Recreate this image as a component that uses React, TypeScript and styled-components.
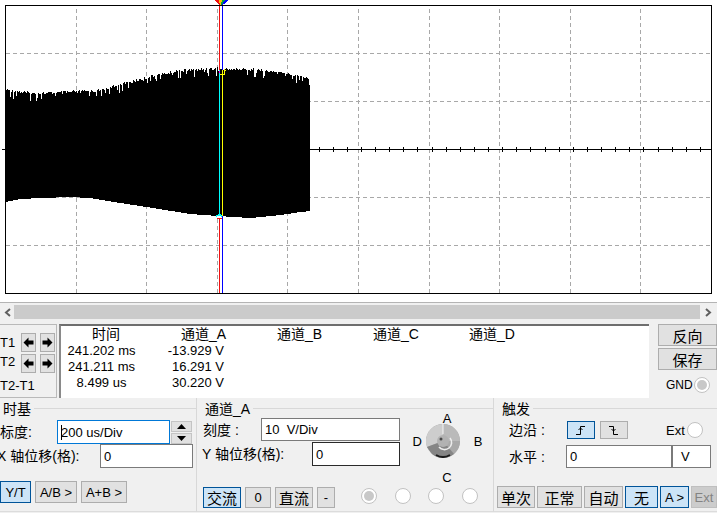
import React from "react";
import styled, { createGlobalStyle } from "styled-components";

const GlobalStyle = createGlobalStyle`
  html, body { margin: 0; padding: 0; background: #f0f0f0; }
  body { font-family: "Liberation Sans", "Noto Sans CJK SC", sans-serif; font-size: 13px; color: #000; }
`;

const Page = styled.div`
  width: 717px;
  height: 513px;
  overflow: hidden;
  display: flex;
  flex-direction: column;
  background: #f0f0f0;
`;

const PlotArea = styled.div`
  height: 302px;
  background: #fff;
  border-bottom: 1px solid #b4b4b4;
  svg { display: block; }
`;

const ScrollBar = styled.div`
  height: 14px;
  margin-top: 2px;
  display: flex;
  align-items: center;
`;
const ScrollEnd = styled.div<{ $width: number }>`
  width: ${(p) => p.$width}px;
  display: flex;
  justify-content: center;
  align-items: center;
`;
const ScrollTrack = styled.div`
  width: 686px;
  height: 14px;
  background: #cbcbcb;
`;

const ReadoutRow = styled.div`
  margin-top: 5px;
  height: 74px;
  display: flex;
`;

const CursorPanel = styled.div`
  width: 57px;
  box-sizing: border-box;
  border-top: 1px solid #b9b9b9;
  border-right: 1px solid #b9b9b9;
  border-bottom: 1px solid #b9b9b9;
  padding-top: 8px;
  display: flex;
  flex-direction: column;
  gap: 2px;
`;
const CursorRow = styled.div`
  display: flex;
  align-items: center;
  height: 19px;
  gap: 4px;
`;
const CursorName = styled.span<{ $raise?: number }>`
  width: 17px;
  line-height: 19px;
  padding-bottom: ${(p) => p.$raise ?? 0}px;
`;
const CursorDiff = styled.div`
  margin-top: 3px;
  line-height: 15px;
`;
const ArrowButton = styled.div`
  width: 15px;
  height: 19px;
  box-sizing: border-box;
  background: #e1e1e1;
  border: 1px solid #adadad;
  display: flex;
  align-items: center;
  justify-content: center;
`;

const DataBox = styled.div`
  margin-left: 2px;
  width: 590px;
  box-sizing: border-box;
  background: #fff;
  border-top: 2px solid #6e6e6e;
  border-left: 2px solid #8a8a8a;
  display: grid;
  grid-template-columns: 84px repeat(4, 96px);
  grid-auto-rows: 16px;
`;
const HeadCell = styled.div<{ $first?: boolean }>`
  font-size: 14px;
  height: 17px;
  line-height: 17px;
  white-space: nowrap;
  padding-left: ${(p) => (p.$first ? "31px" : "36px")};
`;
const TimeCell = styled.div`
  text-align: center;
  line-height: 16px;
  white-space: nowrap;
  padding: 1px 3px 0 0;
`;
const ValueCell = styled.div`
  text-align: right;
  padding-right: 17px;
  line-height: 16px;
  white-space: nowrap;
  padding-top: 1px;
`;

const SideColumn = styled.div`
  margin-left: 9px;
  width: 59px;
  display: flex;
  flex-direction: column;
  gap: 2px;
`;

const ControlRow = styled.div`
  height: 115px;
  display: grid;
  grid-template-columns: 196px 297px 224px;
`;

const Group = styled.section<{ $divider?: boolean }>`
  box-sizing: border-box;
  height: 114px;
  border-bottom: 1px solid #dcdcdc;
  border-left: ${(p) => (p.$divider ? "1px solid #d8d8d8" : "none")};
  display: flex;
  flex-direction: column;
`;
const GroupHead = styled.header<{ $inset: number }>`
  height: 20px;
  display: flex;
  align-items: center;
  gap: 3px;
  padding-left: ${(p) => p.$inset}px;
  font-size: 14px;
  white-space: nowrap;
  &::after {
    content: "";
    flex: 1;
    height: 1px;
    background: #d8d8d8;
  }
`;

const FieldRow = styled.div<{ $top?: number; $left?: number }>`
  display: flex;
  align-items: center;
  margin-top: ${(p) => p.$top ?? 0}px;
  margin-left: ${(p) => p.$left ?? 0}px;
`;
const Label = styled.span<{ $width: number }>`
  width: ${(p) => p.$width}px;
  flex: none;
  font-size: 14px;
  white-space: nowrap;
  padding-bottom: 2px;
`;
const Field = styled.div<{ $width: number; $height: number; $tone?: "focus" | "dark" | "grey"; $pad?: number }>`
  width: ${(p) => p.$width}px;
  height: ${(p) => p.$height}px;
  flex: none;
  box-sizing: border-box;
  background: #fff;
  border: 1px solid
    ${(p) => (p.$tone === "focus" ? "#0078d7" : p.$tone === "dark" ? "#2a2a2a" : "#7a7a7a")};
  padding-left: ${(p) => p.$pad ?? 3}px;
  display: flex;
  align-items: center;
  white-space: pre;
`;
const Caret = styled.span`
  width: 1px;
  height: 15px;
  margin-right: -1px;
  background: #000;
`;
const Spinner = styled.div`
  width: 21px;
  height: 23px;
  margin-left: 1px;
  display: flex;
  flex-direction: column;
  gap: 1px;
`;
const SpinPart = styled.div`
  flex: 1;
  background: #e1e1e1;
  border: 1px solid #c4c4c4;
  display: flex;
  align-items: center;
  justify-content: center;
`;

const ButtonRow = styled.div<{ $top: number; $left: number; $gap: number }>`
  display: flex;
  gap: ${(p) => p.$gap}px;
  margin-top: ${(p) => p.$top}px;
  margin-left: ${(p) => p.$left}px;
`;
const EdgeButtons = styled.div`
  display: flex;
  gap: 5px;
`;
const FlatButton = styled.div<{ $width: number; $height?: number; $on?: boolean; $off?: boolean; $big?: boolean }>`
  width: ${(p) => p.$width}px;
  height: ${(p) => p.$height ?? 22}px;
  flex: none;
  box-sizing: border-box;
  background: ${(p) => (p.$on ? "#cce4f7" : p.$off ? "#cccccc" : "#e1e1e1")};
  border: 1px solid ${(p) => (p.$on ? "#005499" : p.$off ? "#bfbfbf" : "#adadad")};
  color: ${(p) => (p.$off ? "#838383" : "#000")};
  font-size: ${(p) => (p.$big ? "15px" : "13px")};
  display: flex;
  align-items: center;
  justify-content: center;
  white-space: nowrap;
`;

const Radio = styled.div<{ $checked?: boolean }>`
  width: 16px;
  height: 16px;
  flex: none;
  box-sizing: border-box;
  border-radius: 50%;
  border: 1px solid #c2c2c2;
  background: #fff;
  display: flex;
  align-items: center;
  justify-content: center;
  &::after {
    content: "";
    width: 10px;
    height: 10px;
    border-radius: 50%;
    background: ${(p) => (p.$checked ? "#c8c8c8" : "transparent")};
  }
`;
const RadioRow = styled.div`
  display: flex;
  align-items: center;
  gap: 17.6px;
  margin: 0 0 3px 22px;
`;
const GndRow = styled.div`
  display: flex;
  align-items: center;
  gap: 1px;
  margin: 5px 0 0 8px;
  font-size: 12px;
`;

const ChannelTop = styled.div`
  display: flex;
`;
const ChannelFields = styled.div`
  width: 205px;
  flex: none;
`;
const KnobGrid = styled.div`
  margin: -6px 0 0 0;
  display: grid;
  grid-template-columns: 24px 34px 36px;
  grid-template-rows: 12px 34px 38px;
  align-items: center;
  text-align: center;
`;
const KnobTitle = styled.span<{ $col: number; $row: number }>`
  grid-column: ${(p) => p.$col};
  grid-row: ${(p) => p.$row};
  padding-left: ${(p) => (p.$col === 2 ? 8 : 0)}px;
  padding-right: ${(p) => (p.$col === 1 ? 4 : 0)}px;
  text-align: ${(p) => (p.$col === 1 ? "right" : "center")};
`;
const KnobHolder = styled.div`
  grid-column: 2;
  grid-row: 2;
  height: 34px;
  svg { display: block; }
`;
const ExtLabel = styled.span`
  margin-left: 38px;
  margin-right: 2px;
`;

const W = 717;
const GRID_X = [76, 146.5, 217, 287.5, 358, 429, 499, 570, 640.5];
const GRID_Y = [53, 101, 197, 245];

// linear interpolation through measured envelope points
const interp = (pts: number[][], x: number) => {
  for (let i = 1; i < pts.length; i++) {
    if (x <= pts[i][0]) {
      const [x0, y0] = pts[i - 1];
      const [x1, y1] = pts[i];
      return y0 + ((y1 - y0) * (x - x0)) / (x1 - x0);
    }
  }
  return pts[pts.length - 1][1];
};

const TOP = [[5, 89], [33, 93], [60, 92], [100, 90], [120, 84], [150, 76], [180, 70], [215, 68], [250, 69], [280, 72], [305, 77], [310, 78]];
const BOTTOM = [[5, 202], [20, 199], [40, 198], [70, 197], [90, 198], [120, 203], [146, 207], [190, 214], [217, 216], [250, 218], [280, 215], [300, 212], [310, 211]];

const noise = (x: number) => {
  const v = Math.sin(x * 12.9898) * 43758.5453;
  return v - Math.floor(v);
};

const buildWave = () => {
  let d = "";
  for (let x = 5; x < 310; x++) {
    const n = noise(x);
    const spike = n > 0.86 ? 4 + (n - 0.86) * 40 : n * 3.5;
    const top = Math.round(interp(TOP, x) + spike - 1);
    const bottom = Math.round(interp(BOTTOM, x));
    d += `M${x + 0.5} ${x === 309 ? 85 : top}V${bottom}`;
  }
  return d;
};

const buildTicks = () => {
  let d = "M2 149.5H5";
  for (let x = 8; x < 712; x += 14.12) {
    const px = Math.round(x) + 0.5;
    d += `M${px} 147V152`;
  }
  return d;
};

const Plot = () => (
  <svg width={W} height={302} shapeRendering="crispEdges">
    {GRID_X.map((x) => (
      <line key={x} x1={Math.floor(x) + 0.5} x2={Math.floor(x) + 0.5} y1={9} y2={293} stroke="#a8a8a8" strokeDasharray="4 3" />
    ))}
    {GRID_Y.map((y) => (
      <line key={y} x1={6} x2={711} y1={y + 0.5} y2={y + 0.5} stroke="#a8a8a8" strokeDasharray="4 3" />
    ))}
    <line x1={5} x2={712} y1={149.5} y2={149.5} stroke="#000" />
    <path d={buildTicks()} stroke="#000" fill="none" />
    <rect x={5} y={5} width={706.5} height={288} fill="none" stroke="#000" />
    <path d={buildWave()} stroke="#000" fill="none" />

    {/* cursors, xor colours over the wave */}
    <line x1={219.5} x2={219.5} y1={6} y2={70} stroke="#f01010" />
    <line x1={222.5} x2={222.5} y1={6} y2={70} stroke="#0000ff" />
    <line x1={219.5} x2={219.5} y1={70} y2={216} stroke="#00ffff" />
    <line x1={222.5} x2={222.5} y1={70} y2={216} stroke="#ffff00" />
    <line x1={219.5} x2={219.5} y1={218} y2={293} stroke="#f01010" />
    <line x1={222.5} x2={222.5} y1={216} y2={293} stroke="#0000ff" />
    <path d="M220 74H224V69M224.5 70H226" stroke="#ffff00" fill="none" />
    <rect x={219} y={71} width={1} height={2} fill="#ff00ff" />
    <path d="M216.5 217V215H218V214H220V215H221V217" stroke="#00ffff" fill="none" />
    <rect x={217} y={218} width={5} height={1} fill="#f01010" />

    {/* cursor handles */}
    <polygon points="214,0 219,0 220,5 218,4" fill="#f01010" />
    <polygon points="219,0 222,0 221,5 220,5" fill="#ffc000" />
    <polygon points="222,0 225,0 223,4 221,5" fill="#00a040" />
    <polygon points="225,0 229,0 224,4 222,5" fill="#0000ff" />
  </svg>
);

const ArrowIcon = ({ flip }: { flip?: boolean }) => (
  <svg width={11} height={11} viewBox="0 0 11 11" style={flip ? { transform: "scaleX(-1)" } : undefined}>
    <path d="M0.5 5.5 5.5 0.5V3.5H10.5V7.5H5.5V10.5Z" fill="#000" />
  </svg>
);

const SpinGlyph = ({ down }: { down?: boolean }) => (
  <svg width={9} height={5} viewBox="0 0 9 5">
    <path d={down ? "M0 0H9L4.5 5Z" : "M0 5H9L4.5 0Z"} fill="#000" />
  </svg>
);

const Chevron = ({ right }: { right?: boolean }) => (
  <svg width={7} height={9} viewBox="0 0 7 9">
    <path d={right ? "M1 1 5 4.5 1 8" : "M6 1 2 4.5 6 8"} fill="none" stroke="#606060" strokeWidth={2} />
  </svg>
);

const Knob = () => (
  <svg width={34} height={34} viewBox="0 0 34 34">
    <circle cx={17} cy={17} r={17} fill="#a6a6a6" />
    <path d="M17 17 17 0A17 17 0 0 0 1 23Z" fill="#cdcdcd" />
    <path d="M17 17 17 0A17 17 0 0 1 34 17Z" fill="#bababa" />
    <path d="M17 17 34 17A17 17 0 0 1 28 30Z" fill="#a9a9a9" />
    <path d="M17 17 28 30A17 17 0 0 1 6 30L1 23Z" fill="#858585" />
    <path d="M10 31Q17 35 24 31" fill="none" stroke="#1c1c1c" strokeWidth={2} />
    <line x1={17} y1={0} x2={17} y2={10} stroke="#f4f4f4" />
    <circle cx={17} cy={17} r={6} fill="#b2b2b2" />
    <path d="M24 14A7 7 0 0 1 13 23" fill="none" stroke="#ececec" strokeWidth={1.6} />
    <circle cx={15} cy={15} r={1.5} fill="#4a4a4a" />
  </svg>
);

const EdgeIcon = ({ falling }: { falling?: boolean }) => (
  <svg width={12} height={11} viewBox="0 0 12 11">
    {falling ? (
      <path d="M1 1.5H5.5V9.5H10M3.5 4 5.5 6 7.5 4" fill="none" stroke="#000" />
    ) : (
      <path d="M1 9.5H5.5V1.5H10M3.5 5 5.5 3 7.5 5" fill="none" stroke="#000" />
    )}
  </svg>
);

const rows = [
  ["241.202 ms", "-13.929 V"],
  ["241.211 ms", "16.291 V"],
  ["8.499 us", "30.220 V"],
];

const App = () => (
  <Page>
    <GlobalStyle />
    <PlotArea>
      <Plot />
    </PlotArea>

    <ScrollBar>
      <ScrollEnd $width={14}>
        <Chevron />
      </ScrollEnd>
      <ScrollTrack />
      <ScrollEnd $width={17}>
        <Chevron right />
      </ScrollEnd>
    </ScrollBar>

    <ReadoutRow>
      <CursorPanel>
        <CursorRow>
          <CursorName>T1</CursorName>
          <ArrowButton><ArrowIcon /></ArrowButton>
          <ArrowButton><ArrowIcon flip /></ArrowButton>
        </CursorRow>
        <CursorRow>
          <CursorName $raise={4}>T2</CursorName>
          <ArrowButton><ArrowIcon /></ArrowButton>
          <ArrowButton><ArrowIcon flip /></ArrowButton>
        </CursorRow>
        <CursorDiff>T2-T1</CursorDiff>
      </CursorPanel>

      <DataBox>
        <HeadCell $first>时间</HeadCell>
        <HeadCell>通道_A</HeadCell>
        <HeadCell>通道_B</HeadCell>
        <HeadCell>通道_C</HeadCell>
        <HeadCell>通道_D</HeadCell>
        {rows.map(([t, v]) => (
          <React.Fragment key={t}>
            <TimeCell>{t}</TimeCell>
            <ValueCell>{v}</ValueCell>
            <span />
            <span />
            <span />
          </React.Fragment>
        ))}
      </DataBox>

      <SideColumn>
        <FlatButton $width={59} $big>反向</FlatButton>
        <FlatButton $width={59} $big>保存</FlatButton>
        <GndRow>
          GND
          <Radio $checked />
        </GndRow>
      </SideColumn>
    </ReadoutRow>

    <ControlRow>
      <Group>
        <GroupHead $inset={3}>时基</GroupHead>
        <FieldRow $top={2}>
          <Label $width={57}>标度:</Label>
          <Field $width={113} $height={24} $tone="focus">
            <Caret />200 us/Div
          </Field>
          <Spinner>
            <SpinPart><SpinGlyph /></SpinPart>
            <SpinPart><SpinGlyph down /></SpinPart>
          </Spinner>
        </FieldRow>
        <FieldRow $left={-3}>
          <Label $width={103}>X 轴位移(格):</Label>
          <Field $width={93} $height={24}>0</Field>
        </FieldRow>
        <ButtonRow $top={13} $left={0} $gap={4}>
          <FlatButton $width={31} $on>Y/T</FlatButton>
          <FlatButton $width={42}>A/B &gt;</FlatButton>
          <FlatButton $width={46}>A+B &gt;</FlatButton>
        </ButtonRow>
      </Group>

      <Group $divider>
        <GroupHead $inset={8}>通道_A</GroupHead>
        <ChannelTop>
          <ChannelFields>
            <FieldRow $left={6}>
              <Label $width={58}>刻度 :</Label>
              <Field $width={139} $height={23}>10  V/Div</Field>
            </FieldRow>
            <FieldRow $top={1} $left={5}>
              <Label $width={110}>Y 轴位移(格):</Label>
              <Field $width={88} $height={24} $tone="dark">0</Field>
            </FieldRow>
          </ChannelFields>
          <KnobGrid>
            <KnobTitle $col={2} $row={1}>A</KnobTitle>
            <KnobTitle $col={1} $row={2}>D</KnobTitle>
            <KnobHolder><Knob /></KnobHolder>
            <KnobTitle $col={3} $row={2}>B</KnobTitle>
            <KnobTitle $col={2} $row={3}>C</KnobTitle>
          </KnobGrid>
        </ChannelTop>
        <ButtonRow $top={-9} $left={6} $gap={4}>
          <FlatButton $width={38} $height={21} $on $big>交流</FlatButton>
          <FlatButton $width={26} $height={21}>0</FlatButton>
          <FlatButton $width={38} $height={21} $big>直流</FlatButton>
          <FlatButton $width={18} $height={21}>-</FlatButton>
          <RadioRow>
            <Radio $checked />
            <Radio />
            <Radio />
            <Radio />
          </RadioRow>
        </ButtonRow>
      </Group>

      <Group $divider>
        <GroupHead $inset={8}>触发</GroupHead>
        <FieldRow $top={1} $left={15}>
          <Label $width={58}>边沿 :</Label>
          <EdgeButtons>
            <FlatButton $width={28} $height={18} $on><EdgeIcon /></FlatButton>
            <FlatButton $width={28} $height={18}><EdgeIcon falling /></FlatButton>
          </EdgeButtons>
          <ExtLabel>Ext</ExtLabel>
          <Radio />
        </FieldRow>
        <FieldRow $top={4} $left={15}>
          <Label $width={57}>水平 :</Label>
          <Field $width={106} $height={23}>0</Field>
          <Field $width={39} $height={23} $pad={8}>V</Field>
        </FieldRow>
        <ButtonRow $top={18} $left={3} $gap={2}>
          <FlatButton $width={38} $big>单次</FlatButton>
          <FlatButton $width={45} $big>正常</FlatButton>
          <FlatButton $width={39} $big>自动</FlatButton>
          <FlatButton $width={33} $on $big>无</FlatButton>
          <FlatButton $width={29} $on>A &gt;</FlatButton>
          <FlatButton $width={26} $off>Ext</FlatButton>
        </ButtonRow>
      </Group>
    </ControlRow>
  </Page>
);

export default App;
